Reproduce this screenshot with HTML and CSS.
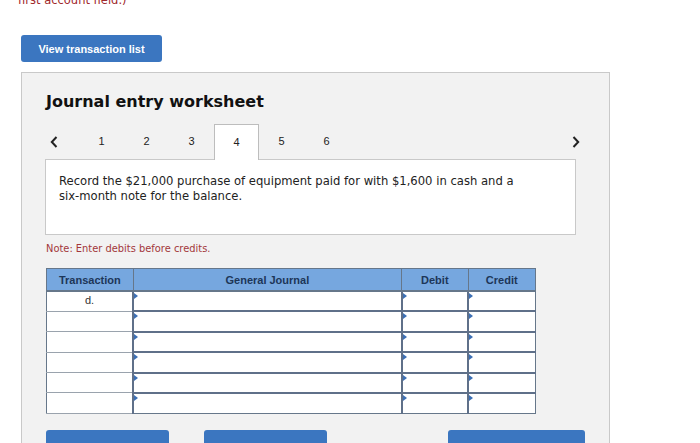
FILE: index.html
```html
<!DOCTYPE html>
<html>
<head>
<meta charset="utf-8">
<link rel="stylesheet" href="styles.css">
</head>
<body>
<div class="top-note"><span>first account field.)</span></div>
<button class="btn-view">View transaction list</button>
<div class="panel">
  <h1 class="title">Journal entry worksheet</h1>
  <div class="tabs">
    <span class="chev chev-left"><svg width="8" height="12" viewBox="0 0 8 12"><path d="M6.5 1 L1.8 6 L6.5 11" fill="none" stroke="#222" stroke-width="2"/></svg></span>
    <span class="tab">1</span>
    <span class="tab">2</span>
    <span class="tab">3</span>
    <span class="tab active">4</span>
    <span class="tab">5</span>
    <span class="tab">6</span>
    <span class="chev chev-right"><svg width="8" height="12" viewBox="0 0 8 12"><path d="M1.5 1 L6.2 6 L1.5 11" fill="none" stroke="#222" stroke-width="2"/></svg></span>
  </div>
  <div class="instr">Record the $21,000 purchase of equipment paid for with $1,600 in cash and a <span class="nowrap">six-month</span> note for the balance.</div>
  <p class="note">Note: Enter debits before credits.</p>
  <table class="journal">
    <thead>
      <tr><th class="c-trans">Transaction</th><th class="c-gj">General Journal</th><th class="c-deb">Debit</th><th class="c-cred">Credit</th></tr>
    </thead>
    <tbody>
      <tr><td class="trans">d.</td><td class="inp"></td><td class="inp"></td><td class="inp"></td></tr>
      <tr><td class="trans"></td><td class="inp"></td><td class="inp"></td><td class="inp"></td></tr>
      <tr><td class="trans"></td><td class="inp"></td><td class="inp"></td><td class="inp"></td></tr>
      <tr><td class="trans"></td><td class="inp"></td><td class="inp"></td><td class="inp"></td></tr>
      <tr><td class="trans"></td><td class="inp"></td><td class="inp"></td><td class="inp"></td></tr>
      <tr><td class="trans"></td><td class="inp"></td><td class="inp"></td><td class="inp"></td></tr>
    </tbody>
  </table>
  <div class="actions">
    <button class="btn-act w1">Record entry</button>
    <button class="btn-act w1">Clear entry</button>
    <button class="btn-act w2 push">View general journal</button>
  </div>
</div>
</body>
</html>
```
FILE: styles.css
```css
html, body {
  margin: 0;
  padding: 0;
  background: #ffffff;
  overflow: hidden;
}
body {
  font-family: "DejaVu Sans", Verdana, sans-serif;
  color: #222;
  width: 700px;
  height: 443px;
}
.top-note {
  height: 6px;
  overflow: hidden;
  display: flex;
  align-items: flex-end;
  padding-left: 18px;
  color: #a0282c;
  font-size: 11.5px;
  line-height: 12px;
}
.btn-view {
  display: block;
  margin: 29px 0 0 21px;
  width: 141px;
  height: 27px;
  border: none;
  border-radius: 3px;
  background: #3b76c0;
  color: #fff;
  font-family: "Liberation Sans", Arial, sans-serif;
  font-weight: bold;
  font-size: 11px;
  padding: 0;
}
.panel {
  margin: 10px 0 0 21px;
  width: 539px;
  height: 400px;
  border: 1px solid #c9c9c9;
  background: #f2f2f2;
  padding: 0 24px;
}
.title {
  margin: 19px 0 0 0;
  font-size: 16px;
  line-height: 20px;
  font-weight: bold;
  color: #111;
}
.tabs {
  display: flex;
  align-items: stretch;
  height: 36px;
  margin-top: 12px;
  position: relative;
  z-index: 2;
}
.chev {
  display: flex;
  align-items: center;
}
.chev-left {
  width: 33px;
  padding-left: 4px;
  box-sizing: border-box;
}
.chev-right {
  margin-left: auto;
  margin-right: 5px;
}
.tab {
  width: 45px;
  box-sizing: border-box;
  display: flex;
  align-items: center;
  justify-content: center;
  font-family: "Liberation Sans", Arial, sans-serif;
  font-size: 11px;
  color: #222;
  padding-bottom: 2px;
}
.tab.active {
  background: #fff;
  border: 1px solid #bdbdbd;
  border-bottom: none;
}
.instr {
  margin: -1px 0 0 -1px;
  width: 531px;
  height: 76px;
  box-sizing: border-box;
  border: 1px solid #c9c9c9;
  background: #fff;
  padding: 14px 13px 0 13px;
  font-size: 11.6px;
  line-height: 15px;
  color: #222;
}
.nowrap {
  white-space: nowrap;
}
.note {
  margin: 7px 0 0 0;
  font-size: 9.9px;
  line-height: 13px;
  color: #a3373a;
}
.journal {
  margin-top: 13px;
  width: 490px;
  border-collapse: collapse;
  font-family: "Liberation Sans", Arial, sans-serif;
  font-size: 11px;
  border: 1px solid #66778a;
}
.journal th {
  height: 21px;
  padding: 0;
  background: #76a7df;
  color: #1d3658;
  font-weight: bold;
  border: 1px solid #66778a;
  border-bottom: 2px solid #66778a;
}
.c-trans { width: 86px; }
.c-gj { width: 271px; }
.c-deb { width: 66px; }
.c-cred { width: 67px; }
.journal tbody tr {
  height: 20.4px;
}
.journal td {
  padding: 0;
  background: #fff;
}
.journal td.trans {
  border: 1px solid #9aa3ad;
  border-left: 1px solid #66778a;
  text-align: center;
  color: #333;
  vertical-align: top;
  padding-top: 2px;
}
.journal td.inp {
  position: relative;
  border-top: 2px solid #5f7089;
  border-left: 2px solid #5f7089;
  border-right: 1px solid #66778a;
  border-bottom: 1px solid #66778a;
}
.journal td.inp::before {
  content: "";
  position: absolute;
  top: 1px;
  left: 0;
  border-left: 4px solid #3c6fb4;
  border-top: 3px solid transparent;
  border-bottom: 3px solid transparent;
}
.actions {
  display: flex;
  gap: 35px;
  margin-top: 16px;
}
.btn-act {
  height: 36px;
  border: none;
  border-radius: 3px;
  background: #3b76c0;
  color: #fff;
  font-family: "Liberation Sans", Arial, sans-serif;
  font-weight: bold;
  font-size: 11px;
  padding: 0;
}
.w1 { width: 123px; }
.w2 { width: 137px; }
.push { margin-left: auto; }
```
